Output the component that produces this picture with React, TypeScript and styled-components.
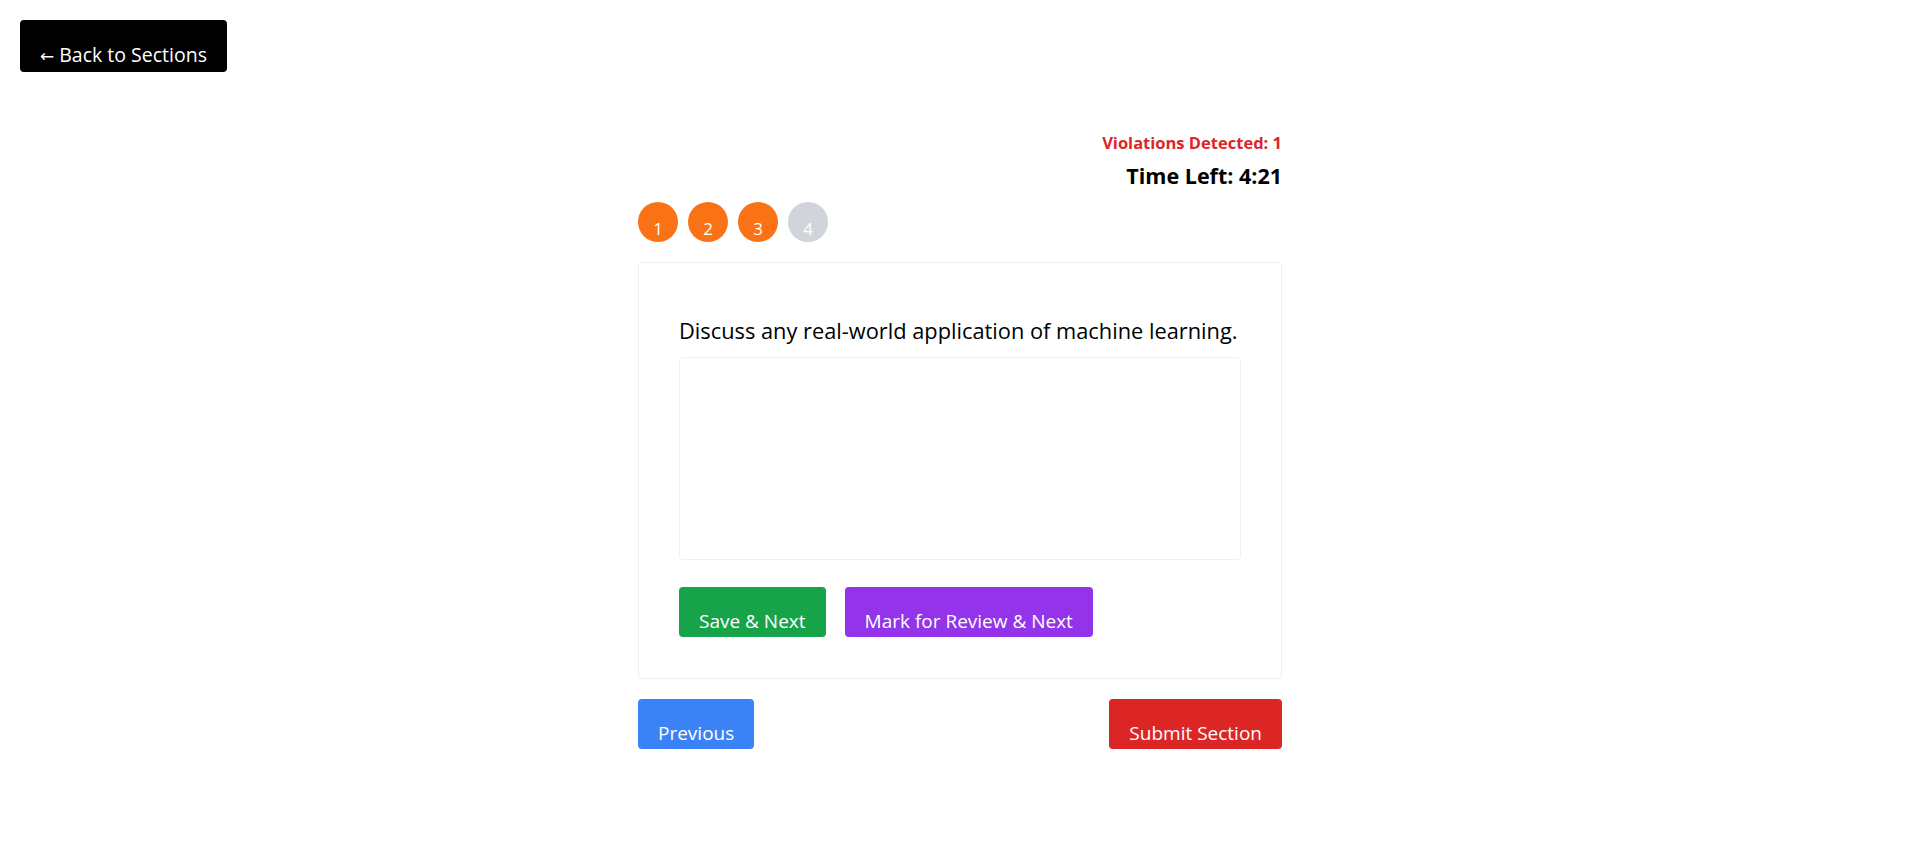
import React from "react";
import styled, { createGlobalStyle } from "styled-components";

const Global = createGlobalStyle`
  html, body { margin: 0; padding: 0; background: #ffffff; }
  body { font-family: "Open Sans", "Noto Sans", sans-serif; color: #000; }
  * { box-sizing: border-box; }
`;

const Page = styled.div`
  padding: 20px;
  min-height: 868px;
`;

const BackButton = styled.button`
  display: block;
  height: 52px;
  padding: 18px 20px 0;
  background: #000;
  color: #fff;
  border: none;
  border-radius: 4px;
  font-family: inherit;
  font-size: 19.5px;
  line-height: 24px;
  white-space: nowrap;
  cursor: pointer;
`;

const Arrow = styled.span`
  font-family: "DejaVu Sans", sans-serif;
  font-size: 17px;
  margin-right: 5px;
`;

const Container = styled.div`
  width: 644px;
  margin: 59px auto 0;
`;

const Header = styled.div`
  display: flex;
  flex-direction: column;
  align-items: flex-end;
`;

const Violations = styled.div`
  color: #dc2626;
  font-weight: 700;
  font-size: 16.5px;
  line-height: 24px;
`;

const TimeLeft = styled.div`
  font-weight: 700;
  font-size: 21.5px;
  line-height: 28px;
  margin-top: 7px;
`;

const Palette = styled.div`
  display: flex;
  gap: 10px;
  margin-top: 12px;
`;

const Dot = styled.button<{ $state: "answered" | "pending" }>`
  width: 40px;
  height: 40px;
  border-radius: 50%;
  border: none;
  padding: 14px 0 0;
  background: ${(p) => (p.$state === "answered" ? "#f97316" : "#d1d5db")};
  color: #fff;
  font-family: inherit;
  font-size: 17px;
  line-height: 24px;
  text-align: center;
`;

const Card = styled.div`
  margin-top: 20px;
  border: 1px solid #eeeeee;
  border-radius: 4px;
  padding: 54px 40px 41px;
`;

const Question = styled.p`
  margin: 0;
  font-size: 21.8px;
  line-height: 28px;
  font-weight: 500;
  white-space: nowrap;
`;

const Answer = styled.textarea`
  display: block;
  width: 100%;
  height: 203px;
  margin-top: 12px;
  border: 1px solid #f0f0f0;
  border-radius: 4px;
  resize: none;
  font-family: inherit;
  font-size: 16px;
  outline: none;
`;

const ActionRow = styled.div`
  display: flex;
  gap: 19px;
  margin-top: 27px;
`;

const ActionButton = styled.button<{ $color: string }>`
  height: 50px;
  padding: 18px 20px 0;
  background: ${(p) => p.$color};
  color: #fff;
  border: none;
  border-radius: 4px;
  font-family: inherit;
  font-size: 19px;
  line-height: 24px;
  white-space: nowrap;
  cursor: pointer;
`;

const FooterRow = styled.div`
  display: flex;
  justify-content: space-between;
  margin-top: 20px;
`;

export default function App() {
  return (
    <>
      <Global />
      <Page>
        <BackButton>
          <Arrow>←</Arrow>Back to Sections
        </BackButton>
        <Container>
          <Header>
            <Violations>Violations Detected: 1</Violations>
            <TimeLeft>Time Left: 4:21</TimeLeft>
          </Header>
          <Palette>
            <Dot $state="answered">1</Dot>
            <Dot $state="answered">2</Dot>
            <Dot $state="answered">3</Dot>
            <Dot $state="pending">4</Dot>
          </Palette>
          <Card>
            <Question>Discuss any real-world application of machine learning.</Question>
            <Answer />
            <ActionRow>
              <ActionButton $color="#16a34a">Save &amp; Next</ActionButton>
              <ActionButton $color="#9333ea">Mark for Review &amp; Next</ActionButton>
            </ActionRow>
          </Card>
          <FooterRow>
            <ActionButton $color="#3b82f6">Previous</ActionButton>
            <ActionButton $color="#dc2626">Submit Section</ActionButton>
          </FooterRow>
        </Container>
      </Page>
    </>
  );
}
